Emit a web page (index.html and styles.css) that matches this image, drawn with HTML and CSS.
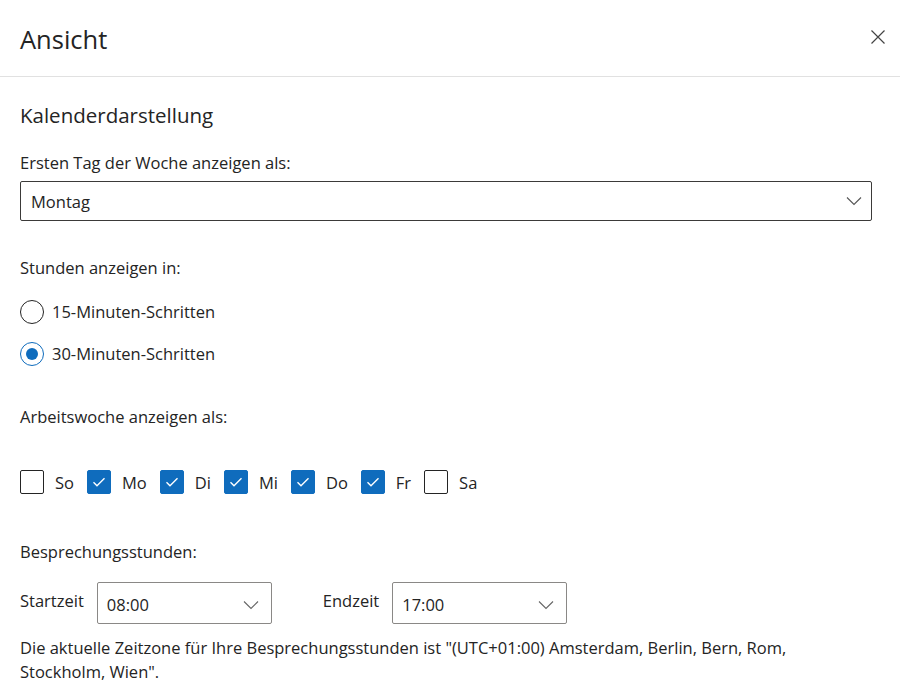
FILE: index.html
```html
<!DOCTYPE html>
<html lang="de">
<head>
<meta charset="utf-8">
<title>Ansicht</title>
<link rel="stylesheet" href="styles.css">
</head>
<body>
<div class="panel">
  <header class="header">
    <h1 class="title">Ansicht</h1>
    <button class="close" aria-label="Schließen">
      <svg width="16" height="16" viewBox="0 0 16 16"><path d="M1.5 1.5L14.5 14.5M14.5 1.5L1.5 14.5" stroke="#444" stroke-width="1.2" fill="none"/></svg>
    </button>
  </header>
  <main class="content">
    <h2 class="section-title">Kalenderdarstellung</h2>

    <div class="label label-first">Ersten Tag der Woche anzeigen als:</div>
    <div class="select select-wide">
      <span>Montag</span>
      <svg class="chev" width="16" height="10" viewBox="0 0 16 10"><path d="M1 1.5L8 8.5L15 1.5" stroke="#555" stroke-width="1.1" fill="none"/></svg>
    </div>

    <div class="label label-gap">Stunden anzeigen in:</div>
    <div class="radios">
      <div class="radio-row"><span class="radio"></span><span>15-Minuten-Schritten</span></div>
      <div class="radio-row"><span class="radio checked"></span><span>30-Minuten-Schritten</span></div>
    </div>

    <div class="label label-gap2">Arbeitswoche anzeigen als:</div>
    <div class="days">
      <div class="day"><span class="box"></span><span>So</span></div>
      <div class="day"><span class="box on"><svg width="14" height="12" viewBox="0 0 14 12"><path d="M1.5 6.2L5 9.7L12.5 2.2" stroke="#fff" stroke-width="1.4" fill="none"/></svg></span><span>Mo</span></div>
      <div class="day"><span class="box on"><svg width="14" height="12" viewBox="0 0 14 12"><path d="M1.5 6.2L5 9.7L12.5 2.2" stroke="#fff" stroke-width="1.4" fill="none"/></svg></span><span>Di</span></div>
      <div class="day"><span class="box on"><svg width="14" height="12" viewBox="0 0 14 12"><path d="M1.5 6.2L5 9.7L12.5 2.2" stroke="#fff" stroke-width="1.4" fill="none"/></svg></span><span>Mi</span></div>
      <div class="day"><span class="box on"><svg width="14" height="12" viewBox="0 0 14 12"><path d="M1.5 6.2L5 9.7L12.5 2.2" stroke="#fff" stroke-width="1.4" fill="none"/></svg></span><span>Do</span></div>
      <div class="day"><span class="box on"><svg width="14" height="12" viewBox="0 0 14 12"><path d="M1.5 6.2L5 9.7L12.5 2.2" stroke="#fff" stroke-width="1.4" fill="none"/></svg></span><span>Fr</span></div>
      <div class="day"><span class="box"></span><span>Sa</span></div>
    </div>

    <div class="label label-gap3">Besprechungsstunden:</div>
    <div class="times">
      <div class="time-group">
        <span class="time-label">Startzeit</span>
        <div class="select select-time"><span>08:00</span><svg class="chev" width="16" height="10" viewBox="0 0 16 10"><path d="M1 1.5L8 8.5L15 1.5" stroke="#666" stroke-width="1.1" fill="none"/></svg></div>
      </div>
      <div class="time-group">
        <span class="time-label">Endzeit</span>
        <div class="select select-time"><span>17:00</span><svg class="chev" width="16" height="10" viewBox="0 0 16 10"><path d="M1 1.5L8 8.5L15 1.5" stroke="#666" stroke-width="1.1" fill="none"/></svg></div>
      </div>
    </div>
    <p class="note">Die aktuelle Zeitzone für Ihre Besprechungsstunden ist "(UTC+01:00) Amsterdam, Berlin, Bern, Rom, Stockholm, Wien".</p>
  </main>
</div>
</body>
</html>
```
FILE: styles.css
```css
* { box-sizing: border-box; }
html, body { margin: 0; padding: 0; background: #fff; }
body {
  font-family: "Open Sans", "Noto Sans", "Liberation Sans", sans-serif;
  color: #242424;
  font-size: 16.5px;
  overflow: hidden;
}
.panel { width: 900px; height: 696px; }
.header {
  height: 77px;
  border-bottom: 1px solid #e1e1e1;
  display: flex;
  align-items: center;
  justify-content: space-between;
  padding: 0 14px 0 20px;
}
.title {
  margin: 0;
  font-size: 25.5px;
  font-weight: 400;
  position: relative;
  top: 1px;
}
.close {
  background: none;
  border: none;
  padding: 0;
  width: 16px;
  height: 16px;
  position: relative;
  top: -1px;
}
.content { padding: 0 20px; }
.section-title {
  margin: 23px 0 0;
  font-size: 20.5px;
  font-weight: 400;
  line-height: 30px;
}
.label {
  font-size: 16.5px;
  line-height: 22px;
}
.label-first { margin-top: 22px; }
.label-gap { margin-top: 36px; }
.label-gap2 { margin-top: 40px; }
.label-gap3 { margin-top: 46px; }
.select {
  display: flex;
  align-items: center;
  justify-content: space-between;
  border-radius: 2px;
  font-size: 16.5px;
}
.select-wide {
  margin-top: 7px;
  width: 852px;
  height: 40px;
  border: 1px solid #3b3a39;
  padding: 0 9px 0 10px;
}
.select-time {
  width: 175px;
  height: 42px;
  border: 1px solid #8a8886;
  padding: 3px 12px 0 9px;
}
.radios { margin-top: 20px; display: flex; flex-direction: column; gap: 17px; }
.radio-row { display: flex; align-items: center; gap: 8px; height: 25px; }
.radio {
  width: 24px; height: 24px;
  border: 1.5px solid #242424;
  border-radius: 50%;
  display: inline-flex; align-items: center; justify-content: center;
}
.radio.checked { border-color: #0f6cbd; }
.radio.checked::after {
  content: "";
  width: 12px; height: 12px;
  border-radius: 50%;
  background: #0f6cbd;
}
.days { margin-top: 41px; display: flex; align-items: center; height: 26px; }
.day { display: flex; align-items: center; gap: 11px; margin-right: 13px; }
.box {
  width: 24px; height: 24px;
  border: 1.5px solid #242424;
  border-radius: 2px;
  display: inline-flex; align-items: center; justify-content: center;
}
.box.on { background: #0f6cbd; border-color: #0f6cbd; }
.times { margin-top: 19px; display: flex; gap: 51px; }
.time-group { display: flex; align-items: center; gap: 13px; }
.time-label { font-size: 16.5px; position: relative; top: -3px; }
.note {
  margin: 12px 0 0;
  max-width: 820px;
  font-size: 16.5px;
  line-height: 24px;
}
```
